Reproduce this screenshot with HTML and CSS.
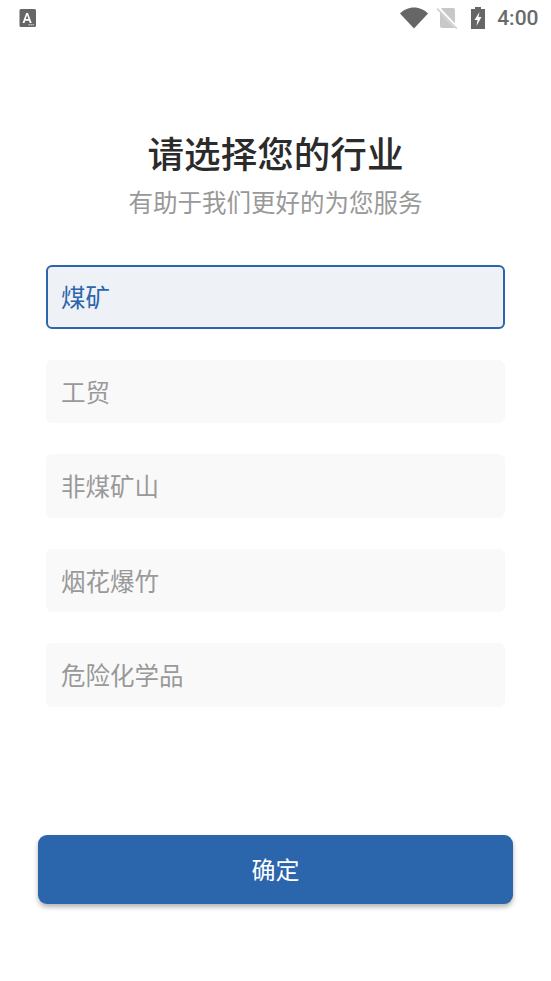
FILE: index.html
```html
<!DOCTYPE html>
<html lang="zh-CN">

<head>
    <meta charset="UTF-8">
    <meta name="viewport" content="width=device-width, initial-scale=1.0">
    <title>请选择您的行业</title>
    <link rel="stylesheet" href="styles.css">
</head>

<body>
    <div id="wrap">
        <div class="status">
            <svg width="18" height="18" viewBox="0 0 18 18">
                <rect x="0.500" y="0" width="16.500" height="18" rx="1.500" fill="#666"/>
                <path d="M3.500 14 7.200 4h1.800L12.700 14h-2l-.7-2.200H6.200L5.500 14zM6.800 10.100h2.600L8.100 6z" fill="#fff"/>
                <path d="M9.500 15.700h6" stroke="#ccc" stroke-width="1.400" stroke-dasharray="1.300 .7"/>
            </svg>
            <div class="status-right">
                <svg width="28" height="22" viewBox="0 0 28 22"><path d="M0 6.500C3.500 3 8.500 0.500 14 0.500s10.500 2.500 14 6L14 21.500z" fill="#666"/></svg>
                <svg class="sim" width="20" height="22" viewBox="0 0 20 22">
                    <path d="M5 1h11a2 2 0 0 1 2 2v18H5a2 2 0 0 1-2-2V3z" fill="#c8c8c8"/>
                    <path d="M0 0 20 21" stroke="#fff" stroke-width="3.500"/>
                    <path d="M0 1.500 20 22" stroke="#c8c8c8" stroke-width="1.300"/>
                </svg>
                <svg class="battery" width="14" height="22" viewBox="0 0 14 22">
                    <path d="M4 0h6v2h4v20H0V2h4z" fill="#666"/>
                    <path d="M8.500 5 3.500 13h3l-1 6 5-9H7.500z" fill="#fff"/>
                </svg>
                <span class="time">4:00</span>
            </div>
        </div>

        <div class="head">
            <h1>请选择您的行业</h1>
            <p>有助于我们更好的为您服务</p>
        </div>

        <ul class="list">
            <li class="active">煤矿</li>
            <li>工贸</li>
            <li>非煤矿山</li>
            <li>烟花爆竹</li>
            <li>危险化学品</li>
        </ul>

        <button class="confirm">确定</button>
    </div>
</body>

</html>
```

FILE: styles.css
```css
* {
    margin: 0;
    padding: 0;
    box-sizing: border-box;
}

ul,li {
    list-style: none;
}

body {
    background-color: #fff;
    font-family: "Roboto", "Noto Sans CJK SC", sans-serif;
}

#wrap {
    width: 551px;
    height: 981px;
    overflow: hidden;
}

.status {
    display: flex;
    justify-content: space-between;
    align-items: center;
    height: 36px;
    padding: 0 12.500px 0 19px;
}

.status-right {
    display: flex;
    align-items: center;
    gap: 9px;
}

.status-right .battery {
    margin-left: 5px;
}

.status-right .time {
    margin-left: 3px;
}

.time {
    font-size: 21px;
    font-weight: 500;
    color: #6a6a6a;
}

.head {
    margin-top: 96px;
    text-align: center;
}

.head h1 {
    font-size: 36.600px;
    line-height: 48px;
    font-weight: 500;
    color: #2b2b2b;
}

.head p {
    margin-top: 7px;
    font-size: 24.500px;
    line-height: 34px;
    color: #999;
}

.list {
    display: flex;
    flex-direction: column;
    gap: 31px;
    margin: 44px 46px 0;
}

.list li {
    height: 63.600px;
    padding-left: 14px;
    line-height: 65px;
    font-size: 24.500px;
    color: #999;
    background-color: #f9f9f9;
    border: 1px solid #f9f9f9;
    border-radius: 6px;
}

.list li.active {
    color: #2b65ac;
    background-color: #eef2f7;
    border: 2px solid #2b65ac;
    padding-left: 13px;
    line-height: 63px;
}

.confirm {
    display: block;
    width: 475px;
    height: 69px;
    margin: 128px 0 0 38px;
    padding-bottom: 2px;
    font-family: inherit;
    font-size: 24px;
    color: #fff;
    background-color: #2b65ac;
    border: none;
    border-radius: 9px;
    box-shadow: 0 3px 5px rgba(0, 0, 0, 0.3);
}
```
